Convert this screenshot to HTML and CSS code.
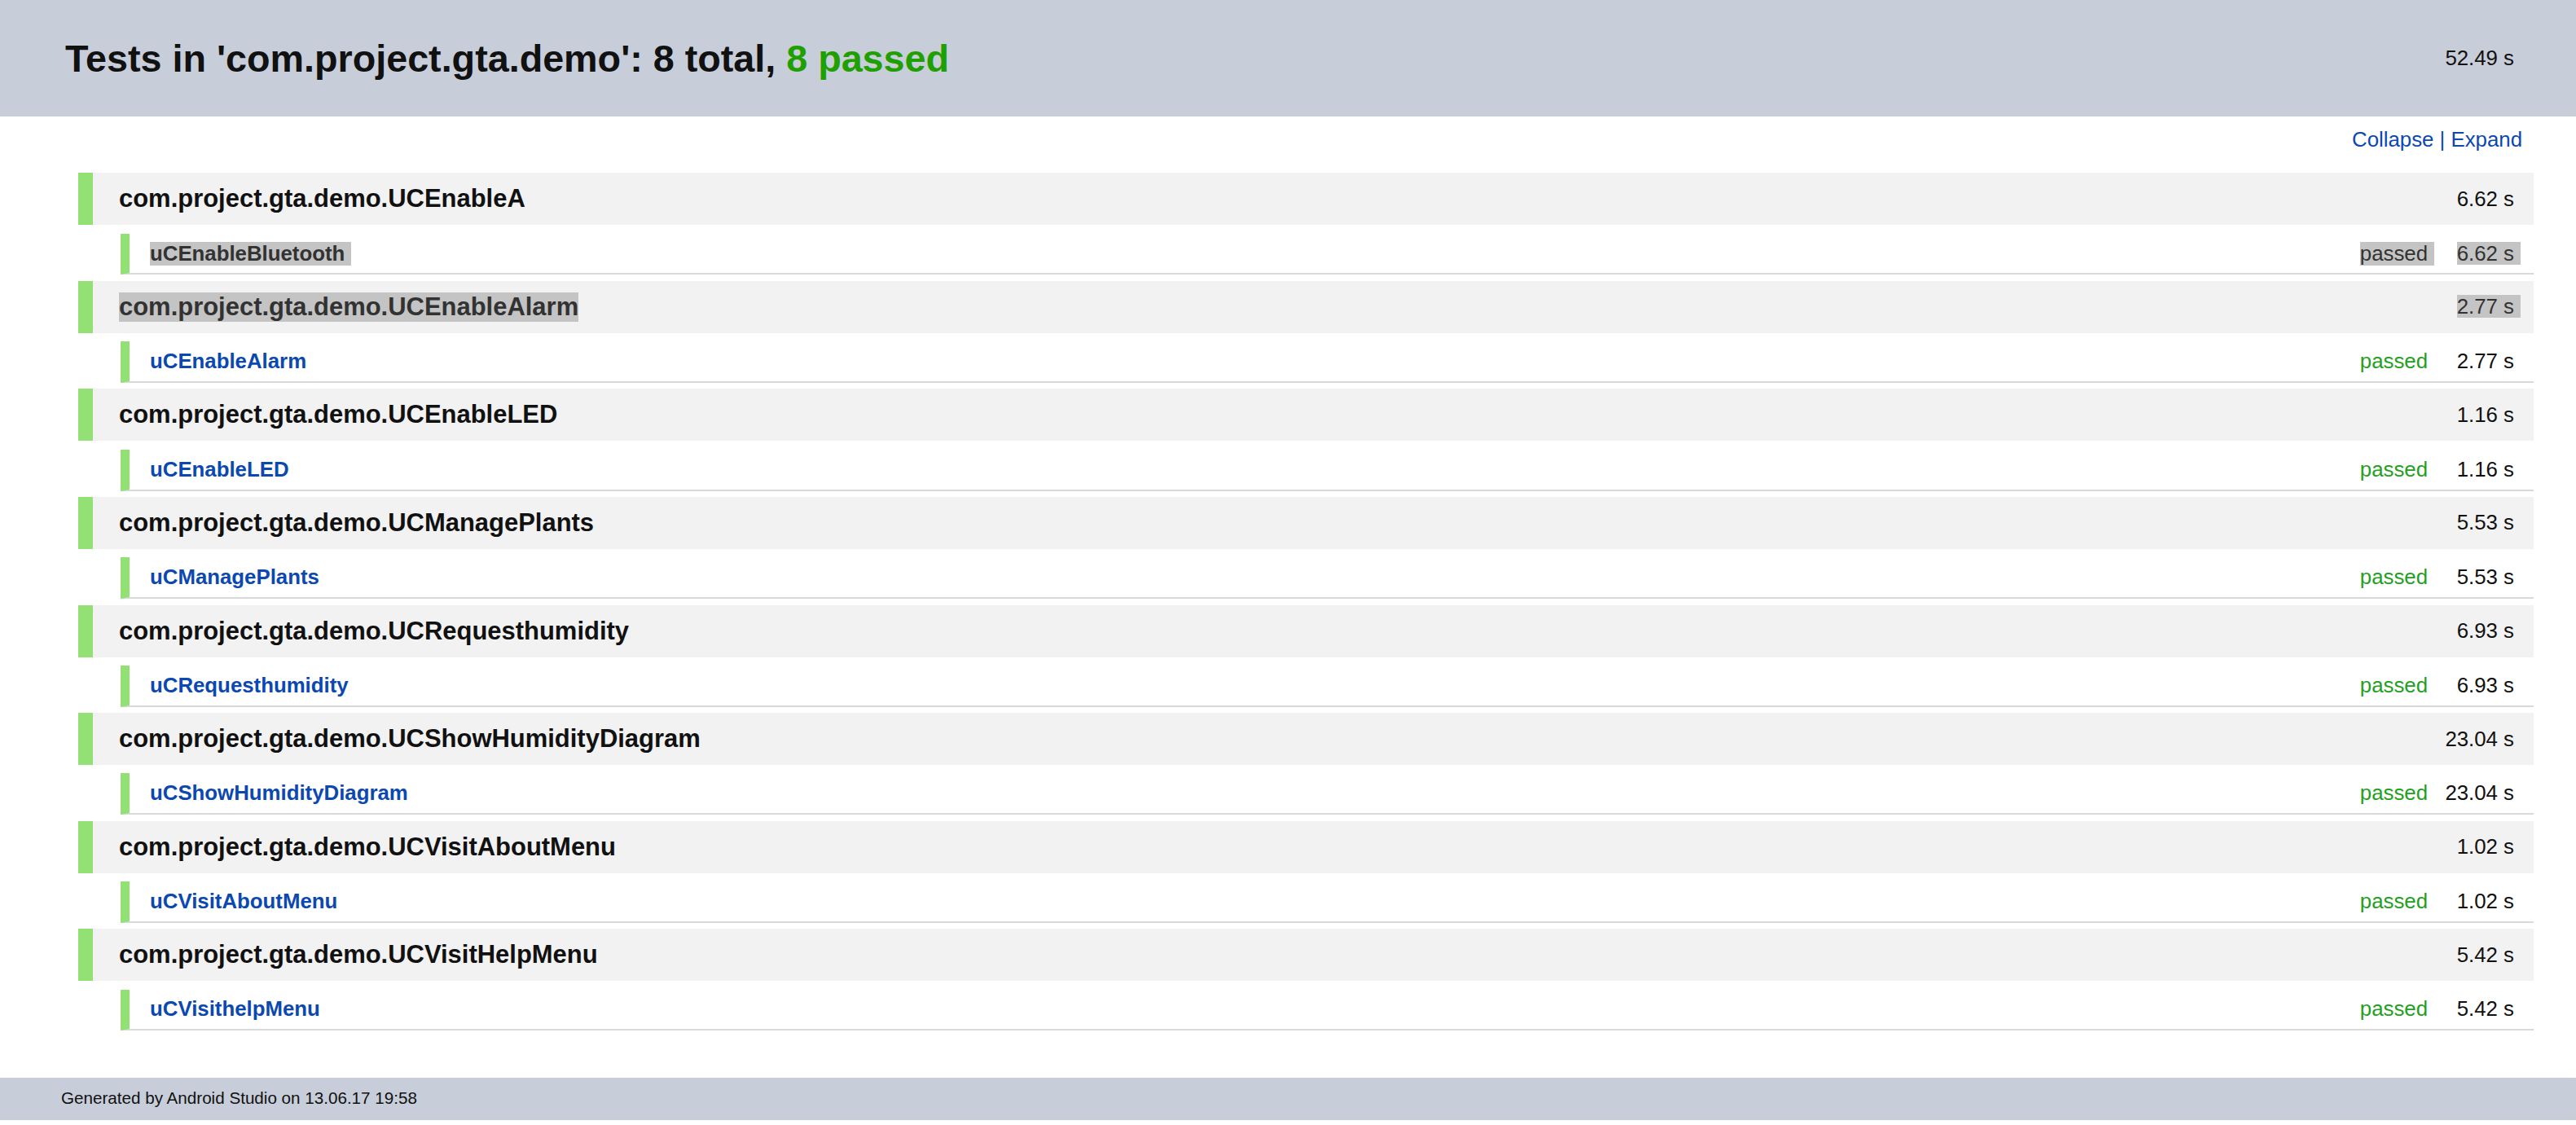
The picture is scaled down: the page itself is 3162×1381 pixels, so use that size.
FILE: index.html
```html
<!DOCTYPE html>
<html>
<head>
<meta charset="utf-8">
<title>Test Results</title>
<link rel="stylesheet" href="styles.css">
</head>
<body>
<div class="header">
  <h1 class="title">Tests in 'com.project.gta.demo': 8 total, <span class="ok">8 passed</span></h1>
  <span class="total-time">52.49 s</span>
</div>
<div class="content">
  <div class="toolbar"><a class="link" href="#">Collapse</a> | <a class="link" href="#">Expand</a></div>
  <div class="suites">
    <div class="suite">
      <div class="suite-row"><span class="suite-name">com.project.gta.demo.UCEnableA</span><span class="time">6.62 s</span></div>
      <div class="test-row"><span class="test-name sel trail">uCEnableBluetooth</span><span class="status sel trail">passed</span><span class="time"><span class="sel trail">6.62 s</span></span></div>
    </div>
    <div class="suite">
      <div class="suite-row"><span class="suite-name sel">com.project.gta.demo.UCEnableAlarm</span><span class="time"><span class="sel trail">2.77 s</span></span></div>
      <div class="test-row"><a class="test-name" href="#">uCEnableAlarm</a><span class="status">passed</span><span class="time">2.77 s</span></div>
    </div>
    <div class="suite">
      <div class="suite-row"><span class="suite-name">com.project.gta.demo.UCEnableLED</span><span class="time">1.16 s</span></div>
      <div class="test-row"><a class="test-name" href="#">uCEnableLED</a><span class="status">passed</span><span class="time">1.16 s</span></div>
    </div>
    <div class="suite">
      <div class="suite-row"><span class="suite-name">com.project.gta.demo.UCManagePlants</span><span class="time">5.53 s</span></div>
      <div class="test-row"><a class="test-name" href="#">uCManagePlants</a><span class="status">passed</span><span class="time">5.53 s</span></div>
    </div>
    <div class="suite">
      <div class="suite-row"><span class="suite-name">com.project.gta.demo.UCRequesthumidity</span><span class="time">6.93 s</span></div>
      <div class="test-row"><a class="test-name" href="#">uCRequesthumidity</a><span class="status">passed</span><span class="time">6.93 s</span></div>
    </div>
    <div class="suite">
      <div class="suite-row"><span class="suite-name">com.project.gta.demo.UCShowHumidityDiagram</span><span class="time">23.04 s</span></div>
      <div class="test-row"><a class="test-name" href="#">uCShowHumidityDiagram</a><span class="status">passed</span><span class="time">23.04 s</span></div>
    </div>
    <div class="suite">
      <div class="suite-row"><span class="suite-name">com.project.gta.demo.UCVisitAboutMenu</span><span class="time">1.02 s</span></div>
      <div class="test-row"><a class="test-name" href="#">uCVisitAboutMenu</a><span class="status">passed</span><span class="time">1.02 s</span></div>
    </div>
    <div class="suite">
      <div class="suite-row"><span class="suite-name">com.project.gta.demo.UCVisitHelpMenu</span><span class="time">5.42 s</span></div>
      <div class="test-row"><a class="test-name" href="#">uCVisithelpMenu</a><span class="status">passed</span><span class="time">5.42 s</span></div>
    </div>
  </div>
</div>
<div class="footer">Generated by Android Studio on 13.06.17 19:58</div>
</body>
</html>
```
FILE: styles.css
```css
html, body {
  margin: 0;
  padding: 0;
  background: #ffffff;
}
body {
  font-family: "Liberation Sans", Arial, sans-serif;
  color: #111111;
  font-size: 25.8px;
}
.header {
  background: #c7cdd9;
  height: 143px;
  display: flex;
  align-items: center;
  justify-content: space-between;
  padding: 0 76px 0 80px;
  box-sizing: border-box;
}
.title {
  margin: 0;
  font-size: 46.7px;
  font-weight: bold;
  color: #111111;
}
.ok {
  color: #1fa000;
}
.total-time {
  font-size: 25.8px;
  color: #111111;
}
.content {
  padding: 14.3px 52px 52px 96px;
}
.toolbar {
  text-align: right;
  padding-right: 14px;
  margin-bottom: 26px;
  color: #0b48b0;
}
.link {
  color: #0b48b0;
  text-decoration: none;
}
.suites {
  display: flex;
  flex-direction: column;
  gap: 7.4px;
}
.suite {
  display: flex;
  flex-direction: column;
  gap: 10.3px;
}
.suite-row {
  height: 64px;
  box-sizing: border-box;
  background: #f2f2f2;
  border-left: 18px solid #93e075;
  padding: 0 24px 0 32px;
  display: flex;
  align-items: center;
}
.suite-name {
  flex: 1 1 auto;
  font-size: 30.96px;
  font-weight: bold;
  color: #111111;
}
.suite-row .suite-name.sel {
  flex: 0 0 auto;
  margin-right: auto;
}
.time {
  font-size: 25.8px;
  text-align: right;
  color: #111111;
}
.test-row {
  margin-left: 52px;
  border-left: 11px solid #93e075;
  border-bottom: 2px solid #d9d9d9;
  padding: 9.95px 24px 9.95px 25px;
  display: flex;
  align-items: center;
}
.test-name {
  font-size: 25.8px;
  font-weight: bold;
  color: #0b48b0;
  text-decoration: none;
  margin-right: auto;
}
.status {
  color: #22a022;
  margin-right: 20px;
}
.test-row .time {
  width: 86px;
}
.sel {
  background: #c4c4c4;
  color: #323232;
}
.trail {
  box-shadow: 8px 0 0 #c4c4c4;
}
.footer {
  background: #c7cdd9;
  height: 52px;
  box-sizing: border-box;
  padding: 12.5px 0 0 75px;
  font-size: 20.64px;
  color: #111111;
  margin-top: 6px;
}
```
